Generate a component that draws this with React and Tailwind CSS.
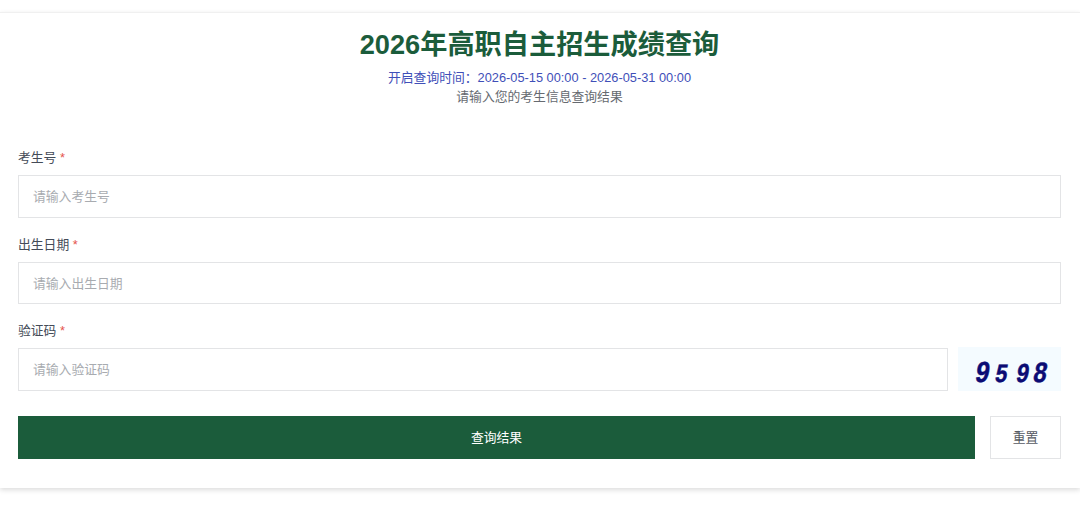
const fontStack = '"Liberation Sans", "Noto Sans CJK SC", sans-serif';

function Field({ label, placeholder }) {
  return (
    <div className="mb-[17px]">
      <label className="block h-[27px] text-[12.8px] leading-[20px] text-[#444b57]">
        {label} <span className="text-[#e5534b]">*</span>
      </label>
      <input
        type="text"
        placeholder={placeholder}
        className="block h-[42.5px] w-full border border-[#e3e4e6] bg-white px-[14px] text-[12.8px] outline-none placeholder:text-[#a8abb0]"
      />
    </div>
  );
}

export default function App() {
  return (
    <div className="h-[513px] overflow-hidden bg-white" style={{ fontFamily: fontStack }}>
      <div className="mt-3 h-[476px] border-t border-[#f0f0f0] bg-white pl-[18px] pr-[19px] pt-[14px] shadow-[0_2px_5px_rgba(0,0,0,0.14)]">
        <div className="text-center">
          <h1 className="text-[27.2px] font-bold leading-[36px] text-[#1b5c3b]">2026年高职自主招生成绩查询</h1>
          <p className="mt-[5px] text-[12.8px] leading-[19px] text-[#3f4fb8]">{'开启查询时间\uFF1A2026-05-15 00:00 - 2026-05-31 00:00'}</p>
          <p className="text-[12.8px] leading-[19px] text-[#666a70]">请输入您的考生信息查询结果</p>
        </div>

        <form className="mt-[42.4px]">
          <Field label="考生号" placeholder="请输入考生号" />
          <Field label="出生日期" placeholder="请输入出生日期" />

          <div className="mb-[25px]">
            <label className="block h-[27px] text-[12.8px] leading-[20px] text-[#444b57]">
              验证码 <span className="text-[#e5534b]">*</span>
            </label>
            <div className="flex h-[42.5px] items-start gap-[10px]">
              <input
                type="text"
                placeholder="请输入验证码"
                className="block h-[42.5px] min-w-0 flex-1 border border-[#e3e4e6] bg-white px-[14px] text-[12.8px] outline-none placeholder:text-[#a8abb0]"
              />
              <div className="-mt-[1px] flex h-[44px] w-[103px] items-baseline bg-[#f4fbff] pl-[17px] pt-[11px] font-bold leading-none text-[#0b0b74] [-webkit-text-stroke:0.5px_#0b0b74]">
                <span className="inline-block w-[12px] -skew-x-12 scale-x-[0.85] text-center text-[29px]">9</span>
                <span className="ml-[8px] inline-block w-[12px] -skew-x-12 scale-x-[0.85] text-center text-[25px]">5</span>
                <span className="ml-[9px] inline-block w-[12px] -skew-x-12 scale-x-[0.85] text-center text-[26px]">9</span>
                <span className="ml-[5px] inline-block w-[12px] -skew-x-12 scale-x-[0.85] text-center text-[28px]">8</span>
              </div>
            </div>
          </div>

          <div className="flex gap-[15px]">
            <button type="button" className="h-[43px] flex-1 bg-[#1b5c3b] text-[12.8px] text-white">查询结果</button>
            <button type="button" className="h-[43px] w-[71px] border border-[#e3e4e6] bg-white text-[12.8px] text-[#555a62]">重置</button>
          </div>
        </form>
      </div>
    </div>
  );
}
